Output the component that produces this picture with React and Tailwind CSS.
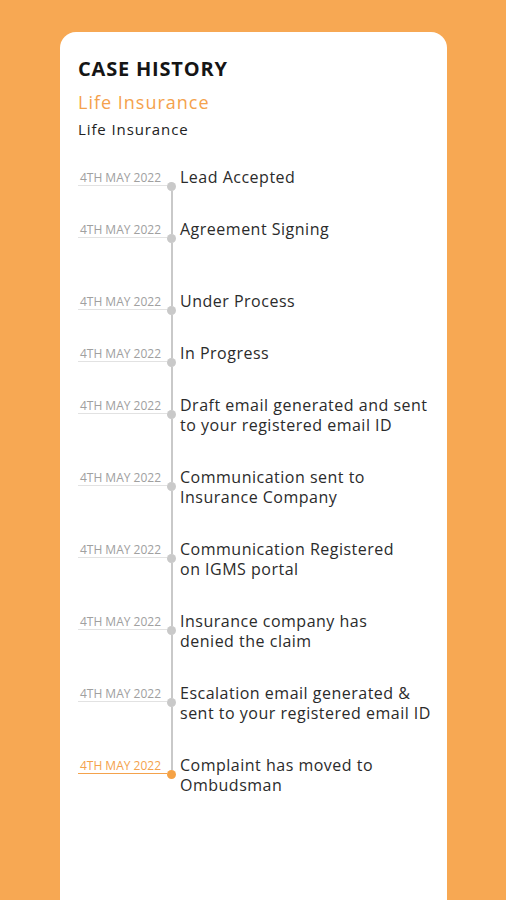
const steps = [
  { date: "4TH MAY 2022", title: ["Lead Accepted"] },
  { date: "4TH MAY 2022", title: ["Agreement Signing"], tall: true },
  { date: "4TH MAY 2022", title: ["Under Process"] },
  { date: "4TH MAY 2022", title: ["In Progress"] },
  { date: "4TH MAY 2022", title: ["Draft email generated and sent", "to your registered email ID"] },
  { date: "4TH MAY 2022", title: ["Communication sent to", "Insurance Company"] },
  { date: "4TH MAY 2022", title: ["Communication Registered", "on IGMS portal"] },
  { date: "4TH MAY 2022", title: ["Insurance company has", "denied the claim"] },
  { date: "4TH MAY 2022", title: ["Escalation email generated &", "sent to your registered email ID"] },
  { date: "4TH MAY 2022", title: ["Complaint has moved to", "Ombudsman"], active: true },
];

function Step({ step, first, last }) {
  const tall = step.tall || step.title.length > 1;
  return (
    <div className={`flex ${tall ? "h-[72px]" : "h-[52px]"}`}>
      {/* date with underline */}
      <div className="w-[89px] pt-[4px]">
        <div
          className={`leading-[14px] text-[12px] text-right pr-[6px] border-b ${
            step.active
              ? "text-[#f4a24c] border-[#f4a24c]"
              : "text-[#a0a0a0] border-[#e2e2e2]"
          }`}
        >
          {step.date}
        </div>
      </div>

      {/* line + dot */}
      <div className="w-[9px] flex flex-col items-center">
        <div className={`w-[2px] h-[15px] ${first ? "" : "bg-[#c9c9c9]"}`}></div>
        <div
          className={`w-[9px] h-[9px] rounded-full ${
            step.active ? "bg-[#f5a245]" : "bg-[#c9c9c9]"
          }`}
        ></div>
        <div className={`w-[2px] flex-1 ${last ? "" : "bg-[#c9c9c9]"}`}></div>
      </div>

      {/* title */}
      <div className="pl-[4px] text-[16px] leading-[20px] tracking-[0.5px] text-[#2b2b2b]">
        {step.title.map((line) => (
          <div key={line}>{line}</div>
        ))}
      </div>
    </div>
  );
}

export default function App() {
  return (
    <div
      className="w-full min-h-[900px] bg-[#f7a853] pt-[32px] overflow-hidden"
      style={{ fontFamily: "'Open Sans', 'Liberation Sans', sans-serif" }}
    >
      <div className="ml-[60px] w-[387px] h-[868px] bg-white rounded-t-[16px] pt-[25px] pl-[18px]">
        <h1 className="text-[20px] leading-[24px] font-bold tracking-[0.8px] text-[#151515]">
          CASE HISTORY
        </h1>
        <div className="mt-[9px] text-[18px] leading-[24px] font-medium tracking-[1px] text-[#f4a24c]">
          Life Insurance
        </div>
        <div className="mt-[5px] text-[15px] leading-[20px] tracking-[0.9px] text-[#222]">
          Life Insurance
        </div>

        <div className="mt-[28px]">
          {steps.map((s, i) => (
            <Step key={i} step={s} first={i === 0} last={i === steps.length - 1} />
          ))}
        </div>
      </div>
    </div>
  );
}
